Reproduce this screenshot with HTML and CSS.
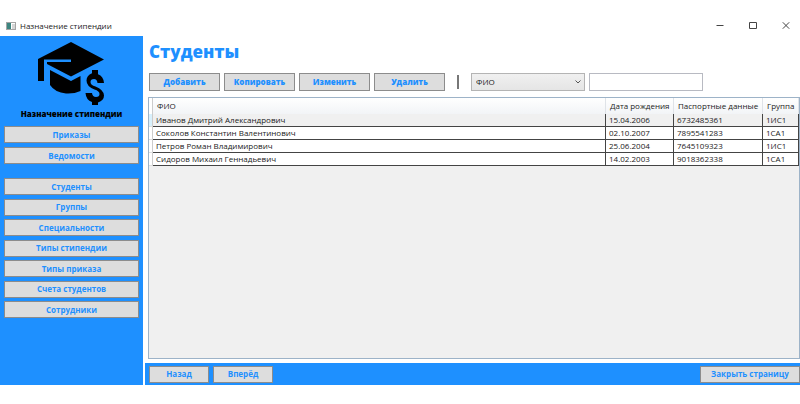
FILE: index.html
```
<!DOCTYPE html>
<html lang="ru">
<head>
<meta charset="utf-8">
<title>Назначение стипендии</title>
<link rel="stylesheet" href="styles.css">
</head>
<body>
<div class="window">
  <header class="titlebar">
    <svg class="app-icon" viewBox="0 0 10 8" aria-hidden="true">
      <rect x=".5" y=".5" width="9" height="7" fill="#fff" stroke="#a5a5a5"/>
      <rect x="1" y="1" width="4" height="6" fill="#3d8580"/>
      <rect x="6" y="2" width="3" height="5" fill="#d5d5d5"/>
    </svg>
    <span class="caption">Назначение стипендии</span>
    <button class="win-btn" aria-label="Свернуть"><svg viewBox="0 0 8 8"><path d="M.5 3.500h7"/></svg></button>
    <button class="win-btn" aria-label="Развернуть"><svg viewBox="0 0 8 8"><path d="M.5.5h7v6h-7z"/></svg></button>
    <button class="win-btn" aria-label="Закрыть"><svg viewBox="0 0 8 8"><path d="M.8.300l6.400 6.400M7.200.300L.8 6.700"/></svg></button>
  </header>
  <div class="body">
    <nav class="sidebar">
      <svg class="logo" viewBox="0 0 66 63" aria-hidden="true">
        <path d="M33 0L66 17.500 33 34.500 9 22V20H33V17.500H6V39H0V17z"/>
        <path d="M12 28L33 39 42.500 34V49Q36 52 28 51.500Q17 50.500 12 43z"/>
        <path d="M54 28h6v4.200q5.500 2 6 8.800h-6.500q-.5-4-3.500-4-3.500 0-3.500 3t5 4.500q8 3 8.500 9 0 5-6 7v2.500h-6v-3q-6-2-6.500-9h6.500q.5 4 4 4 3.500 0 3.500-3t-5-4.500q-8-3-8-9 0-5 5.500-7.300z"/>
      </svg>
      <p class="brand">Назначение стипендии</p>
      <div class="menu menu-docs">
        <button class="btn">Приказы</button>
        <button class="btn">Ведомости</button>
      </div>
      <div class="menu menu-lists">
        <button class="btn">Студенты</button>
        <button class="btn">Группы</button>
        <button class="btn">Специальности</button>
        <button class="btn">Типы стипендии</button>
        <button class="btn">Типы приказа</button>
        <button class="btn">Счета студентов</button>
        <button class="btn">Сотрудники</button>
      </div>
    </nav>
    <main class="page">
      <h1>Студенты</h1>
      <div class="toolbar">
        <button class="btn tool">Добавить</button>
        <button class="btn tool">Копировать</button>
        <button class="btn tool">Изменить</button>
        <button class="btn tool">Удалить</button>
        <span class="divider"></span>
        <div class="combo">
          <select aria-label="Поле поиска"><option>ФИО</option></select>
          <svg viewBox="0 0 6 4" aria-hidden="true"><path d="M.5.5L3 3 5.500.5"/></svg>
        </div>
        <input class="search" type="text" aria-label="Поиск">
      </div>
      <div class="grid">
        <table>
          <colgroup><col class="c-mark"><col><col class="c-date"><col class="c-pass"><col class="c-group"></colgroup>
          <thead><tr><td class="mark"></td><th>ФИО</th><th>Дата рождения</th><th>Паспортные данные</th><th>Группа</th></tr></thead>
          <tbody>
            <tr class="current"><td class="mark"></td><td>Иванов Дмитрий Александрович</td><td>15.04.2006</td><td>6732485361</td><td>1ИС1</td></tr>
            <tr><td class="mark"></td><td>Соколов Константин Валентинович</td><td>02.10.2007</td><td>7895541283</td><td>1СА1</td></tr>
            <tr><td class="mark"></td><td>Петров Роман Владимирович</td><td>25.06.2004</td><td>7645109323</td><td>1ИС1</td></tr>
            <tr><td class="mark"></td><td>Сидоров Михаил Геннадьевич</td><td>14.02.2003</td><td>9018362338</td><td>1СА1</td></tr>
          </tbody>
        </table>
      </div>
      <footer class="footer">
        <button class="btn step">Назад</button>
        <button class="btn step">Вперёд</button>
        <button class="btn close-page">Закрыть страницу</button>
      </footer>
    </main>
  </div>
</div>
</body>
</html>
```
FILE: styles.css
```
* { box-sizing: border-box; }
body {
  margin: 0;
  background: #fff;
  color: #222;
  font: 8px/12px "Open Sans", "Noto Sans", sans-serif;
}
button, select, input { font: inherit; margin: 0; padding: 0; }

.window {
  display: flex;
  flex-direction: column;
  height: 100vh;
  padding: 15px 0 19px;
}
.titlebar {
  display: flex;
  align-items: center;
  flex: 0 0 21px;
  padding-left: 6px;
}
.app-icon { width: 10px; height: 8px; }
.caption { flex: 1; padding-left: 4px; }
.win-btn {
  display: flex;
  align-items: center;
  justify-content: center;
  width: 33px;
  height: 21px;
  border: 0;
  background: none;
}
.win-btn:last-child { width: 28px; margin-left: 3px; }
.win-btn svg { width: 8px; height: 8px; fill: none; stroke: #444; }

.body { display: flex; flex: 1; min-height: 0; }
.sidebar {
  display: flex;
  flex-direction: column;
  flex: 0 0 143px;
  padding: 6px 4px 0;
  background: #1e90ff;
}
.logo { width: 66px; height: 63px; margin-left: 34px; fill: #000; }
.brand {
  margin: 3px 0 6px;
  color: #000;
  font-weight: 800;
  text-align: center;
}
.menu { display: flex; flex-direction: column; justify-content: space-between; }
.menu-docs { height: 38px; }
.menu-lists { height: 140px; margin-top: 14px; }

.btn {
  height: 17px;
  border: 1px solid #8c8c8c;
  background: #ddd;
  color: #1e90ff;
  font-weight: 700;
  line-height: 14px;
  white-space: nowrap;
}

.page { display: flex; flex-direction: column; flex: 1; min-width: 0; }
h1 {
  margin: 4px 0 9px 6px;
  color: #1e90ff;
  font-size: 17px;
  font-weight: 800;
  line-height: 24px;
}
.toolbar {
  display: flex;
  align-items: center;
  gap: 4px;
  height: 18px;
  margin-left: 6px;
}
.tool { width: 71px; height: 18px; font-weight: 800; }
.divider { width: 2px; height: 14px; margin: 0 8px; background: #777; }
.combo { position: relative; width: 114px; height: 18px; }
.combo select {
  width: 100%;
  height: 100%;
  padding-left: 4px;
  border: 1px solid #b4b4b4;
  border-radius: 0;
  background: linear-gradient(#f0f0f0, #e5e5e5);
  color: #222;
  appearance: none;
}
.combo svg {
  position: absolute;
  right: 4px;
  top: 7px;
  width: 6px;
  height: 4px;
  fill: none;
  stroke: #555;
  pointer-events: none;
}
.search { width: 114px; height: 18px; border: 1px solid #b8bac2; background: #fff; }

.grid {
  flex: 1;
  min-height: 0;
  margin: 6px 0 4px 5px;
  border: 1px solid #9db3c8;
  background: #f0f0f0;
}
table { width: 100%; border-collapse: separate; border-spacing: 0; table-layout: fixed; }
.c-mark { width: 4px; }
.c-date { width: 68px; }
.c-pass { width: 89px; }
.c-group { width: 36px; }
th, td { padding: 0 3px; text-align: left; white-space: nowrap; }
th {
  height: 16px;
  padding: 0 4px;
  border-right: 1px solid #dfe3e8;
  background: linear-gradient(#fff, #f2f4f7);
  font-weight: 400;
}
tbody td {
  height: 13px;
  border-right: 1px solid #444;
  border-bottom: 1px solid #444;
  background: #fff;
}
.current td { background: #f0f0f0; }
td.mark { padding: 0; border-right: 1px solid #ccc; border-bottom-color: #ddd; background: #fff; }
.current td.mark { background: #d8f0fc; }

.footer {
  display: flex;
  align-items: center;
  gap: 4px;
  flex: 0 0 22px;
  margin-left: 2px;
  padding-left: 4px;
  background: #1e90ff;
}
.step { width: 60px; }
.close-page { width: 100px; margin-left: auto; }
```
